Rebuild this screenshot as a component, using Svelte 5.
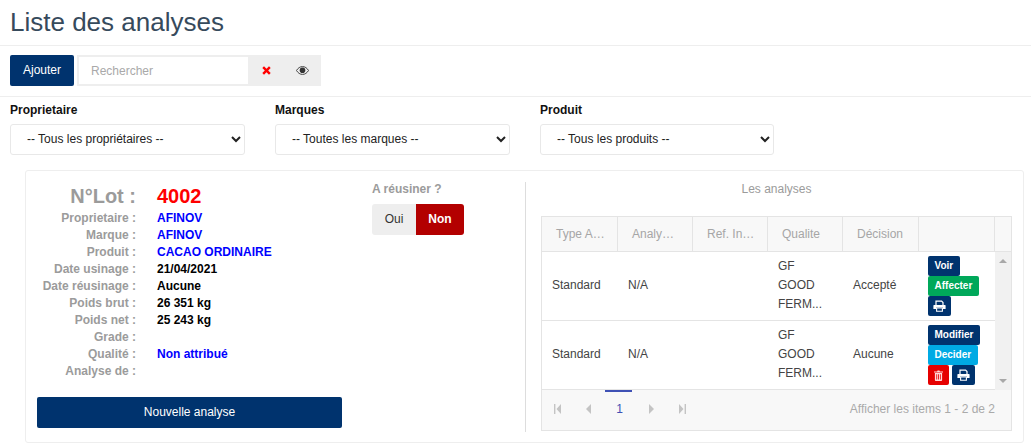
<script>
	const infos = [
		{ label: 'Proprietaire :', value: 'AFINOV', kind: 'blue' },
		{ label: 'Marque :', value: 'AFINOV', kind: 'blue' },
		{ label: 'Produit :', value: 'CACAO ORDINAIRE', kind: 'blue' },
		{ label: 'Date usinage :', value: '21/04/2021', kind: 'black' },
		{ label: 'Date réusinage :', value: 'Aucune', kind: 'black' },
		{ label: 'Poids brut :', value: '26 351 kg', kind: 'black' },
		{ label: 'Poids net :', value: '25 243 kg', kind: 'black' },
		{ label: 'Grade :', value: '', kind: 'black' },
		{ label: 'Qualité :', value: 'Non attribué', kind: 'blue' },
		{ label: 'Analyse de :', value: '', kind: 'black' }
	];

	const filters = [
		{ label: 'Proprietaire', option: '-- Tous les propriétaires --' },
		{ label: 'Marques', option: '-- Toutes les marques --' },
		{ label: 'Produit', option: '-- Tous les produits --' }
	];

	const columns = ['Type A…', 'Analy…', 'Ref. In…', 'Qualite', 'Décision', ''];
</script>

{#snippet printIcon()}
	<svg width="13" height="12" viewBox="0 0 13 12" fill="none">
		<path d="M3 5V1.2h5.6L10 2.6V5" stroke="#fff" stroke-width="1.2" />
		<path d="M1 5h11a.6.6 0 0 1 .6.6V9H10V7.5H3V9H.4V5.6A.6.6 0 0 1 1 5z" fill="#fff" />
		<path d="M3.6 8h5.8v3.2H3.6z" stroke="#fff" stroke-width="1.1" />
	</svg>
{/snippet}

<div class="page">
	<header class="title-bar">
		<h1>Liste des analyses</h1>
	</header>

	<div class="toolbar">
		<button class="btn-main">Ajouter</button>
		<div class="search">
			<input type="text" placeholder="Rechercher" />
			<span class="search-btn">
				<svg width="9" height="9" viewBox="0 0 9 9">
					<path d="M2 .3 4.5 2.8 7 .3 8.7 2 6.2 4.5 8.7 7 7 8.7 4.5 6.2 2 8.7.3 7 2.8 4.5.3 2z" fill="#f00" />
				</svg>
			</span>
			<span class="search-btn eye">
				<svg width="13" height="9" viewBox="0 0 13 9">
					<path d="M.5 4.5C2 2 4 .6 6.5.6S11 2 12.5 4.5C11 7 9 8.4 6.5 8.4S2 7 .5 4.5z" fill="none" stroke="#444" stroke-width="1" />
					<circle cx="6.5" cy="4.2" r="2.8" fill="#333" />
				</svg>
			</span>
		</div>
	</div>

	<div class="filters">
		{#each filters as filter}
			<div class="filter">
				<label for={filter.label}>{filter.label}</label>
				<select id={filter.label}>
					<option>{filter.option}</option>
				</select>
			</div>
		{/each}
	</div>

	<section class="card">
		<div class="lot">
			<dl class="lot-info">
				<dt class="big">N°Lot :</dt>
				<dd class="big">4002</dd>
				{#each infos as info}
					<dt>{info.label}</dt>
					<dd class={info.kind}>{info.value}</dd>
				{/each}
			</dl>
			<button class="btn-new">Nouvelle analyse</button>
		</div>

		<div class="rework">
			<div class="rework-title">A réusiner ?</div>
			<div class="switch">
				<span class="off">Oui</span>
				<span class="on">Non</span>
			</div>
		</div>

		<div class="analyses">
			<div class="analyses-title">Les analyses</div>
			<div class="grid">
				<div class="grid-head">
					{#each columns as col}
						<div class="th"><span>{col}</span></div>
					{/each}
					<div class="th-scroll"></div>
				</div>
				<div class="grid-body">
					<div class="rows">
						<div class="row">
							<div class="cell">Standard</div>
							<div class="cell">N/A</div>
							<div class="cell"></div>
							<div class="cell qual">GF<br />GOOD<br />FERM...</div>
							<div class="cell">Accepté</div>
							<div class="actions">
								<button class="act navy">Voir</button>
								<button class="act green">Affecter</button>
								<button class="act navy icon">{@render printIcon()}</button>
							</div>
						</div>
						<div class="row">
							<div class="cell">Standard</div>
							<div class="cell">N/A</div>
							<div class="cell"></div>
							<div class="cell qual">GF<br />GOOD<br />FERM...</div>
							<div class="cell">Aucune</div>
							<div class="actions">
								<button class="act navy">Modifier</button>
								<button class="act cyan">Decider</button>
								<button class="act red icon">
									<svg width="9" height="11" viewBox="0 0 10 12">
										<path d="M3.4 1.6 4 .5h2l.6 1.1H10v1H0v-1zM1 3.2h8V11a1 1 0 0 1-1 1H2a1 1 0 0 1-1-1zm1.6 1.3v6h.9v-6zm2 0v6h.9v-6zm2 0v6h.9v-6z" fill="#ffd9d9" fill-rule="evenodd" />
									</svg>
								</button>
								<button class="act navy icon">{@render printIcon()}</button>
							</div>
						</div>
					</div>
					<div class="scrollbar">
						<span class="arrow up"></span>
						<span class="arrow down"></span>
					</div>
				</div>
				<div class="pager">
					<svg class="pg" width="7" height="10" viewBox="0 0 7 10"><path d="M0 0h1.4v10H0zM7 0v10L2.5 5z" /></svg>
					<svg class="pg second" width="5" height="10" viewBox="0 0 5 10"><path d="M5 0v10L0 5z" /></svg>
					<span class="page-num">1</span>
					<svg class="pg" width="5" height="10" viewBox="0 0 5 10"><path d="M0 0v10l5-5z" /></svg>
					<svg class="pg last" width="7" height="10" viewBox="0 0 7 10"><path d="M0 0v10l4.5-5zM5.6 0H7v10H5.6z" /></svg>
					<span class="pager-info">Afficher les items 1 - 2 de 2</span>
				</div>
			</div>
		</div>
	</section>
</div>

<style>
	:global(body) {
		margin: 0;
		background: #fff;
		font-family: 'Liberation Sans', Arial, sans-serif;
	}

	.page {
		width: 1031px;
		height: 444px;
		overflow: hidden;
		font-size: 12px;
	}

	/* Header */
	.title-bar {
		height: 45px;
		padding-left: 10px;
		border-bottom: 1px solid #eee;
	}

	h1 {
		margin: 0;
		font-size: 26px;
		font-weight: 400;
		line-height: 45px;
		color: #364a5c;
	}

	/* Toolbar */
	.toolbar {
		display: flex;
		gap: 3px;
		height: 51px;
		padding: 9px 10px 0;
		box-sizing: border-box;
		border-bottom: 1px solid #eee;
	}

	.btn-main {
		width: 64px;
		height: 31px;
		padding: 0 0 2px;
		border: 0;
		border-radius: 2px;
		background: #00336e;
		color: #fff;
		font: 12px 'Liberation Sans', Arial, sans-serif;
	}

	.search {
		display: flex;
		height: 31px;
		background: #eee;
	}

	.search input {
		width: 171px;
		height: 31px;
		padding: 0 12px;
		box-sizing: border-box;
		border: 2px solid #eee;
		border-right: 0;
		border-radius: 2px 0 0 2px;
		background: #fff;
		font: 12px 'Liberation Sans', Arial, sans-serif;
		outline: none;
	}

	.search input::placeholder {
		color: #a9a9a9;
		opacity: 1;
	}

	.search-btn {
		display: flex;
		align-items: center;
		justify-content: center;
		width: 36px;
	}

	.search-btn.eye {
		width: 37px;
	}

	/* Filters */
	.filters {
		display: flex;
		gap: 30px;
		padding: 6px 10px 0;
	}

	.filter {
		display: flex;
		flex-direction: column;
		width: 235px;
	}

	.filter:last-child {
		width: 234px;
	}

	.filter label {
		height: 21px;
		line-height: 15px;
		font-weight: 700;
		color: #111;
	}

	.filter select {
		height: 31px;
		padding: 0 12px 2px;
		border: 1px solid #e8e8e8;
		border-radius: 3px;
		background: #fff;
		color: #222;
		font: 12px 'Liberation Sans', Arial, sans-serif;
		outline: none;
	}

	/* Card */
	.card {
		display: flex;
		width: 999px;
		height: 273px;
		margin: 15px 0 0 25px;
		box-sizing: border-box;
		border: 1px solid #eee;
		border-radius: 3px;
		padding: 11px 11px 10px;
	}

	.lot {
		width: 305px;
		padding-top: 2px;
		flex-shrink: 0;
		display: flex;
		flex-direction: column;
	}

	.lot-info {
		display: grid;
		grid-template-columns: 99px 1fr;
		grid-template-rows: 26px;
		grid-auto-rows: 17px;
		column-gap: 21px;
		margin: 0;
		font-weight: 700;
		line-height: 17px;
	}

	.lot-info dt {
		text-align: right;
		color: #9b9b9b;
	}

	.lot-info dd {
		margin: 0;
	}

	.lot-info .big {
		font-size: 20px;
		line-height: 24px;
	}

	.lot-info dd.big {
		color: #f00;
	}

	.blue {
		color: #00f;
	}

	.black {
		color: #000;
	}

	.btn-new {
		width: 305px;
		height: 31px;
		margin-top: 17px;
		border: 0;
		border-radius: 2px;
		background: #00336e;
		color: #fff;
		font: 12px 'Liberation Sans', Arial, sans-serif;
		padding: 0 0 2px;
	}

	/* Rework switch */
	.rework {
		width: 153px;
		margin-left: 30px;
		flex-shrink: 0;
	}

	.rework-title {
		height: 22px;
		font-weight: 700;
		line-height: 15px;
		color: #9b9b9b;
	}

	.switch {
		display: flex;
		width: 92px;
		height: 31px;
		border-radius: 3px;
		overflow: hidden;
		line-height: 30px;
		text-align: center;
	}

	.off {
		width: 44px;
		background: #eee;
		color: #333;
	}

	.on {
		width: 48px;
		background: #b30000;
		color: #fff;
		font-weight: 700;
	}

	/* Analyses */
	.analyses {
		width: 487px;
		padding-left: 15px;
		box-sizing: border-box;
		border-left: 1px solid #ddd;
	}

	.analyses-title {
		height: 34px;
		line-height: 15px;
		text-align: center;
		color: #9b9b9b;
	}

	.grid {
		width: 471px;
		height: 215px;
		box-sizing: border-box;
		border: 1px solid #e4e4e4;
		display: flex;
		flex-direction: column;
		color: #444;
	}

	.grid-head {
		display: grid;
		grid-template-columns: 76px 75px 75px 75px 76px 76px 16px;
		height: 34px;
		flex-shrink: 0;
		background: #f8f8f8;
		border-bottom: 1px solid #e4e4e4;
		color: #a6a6a6;
	}

	.th {
		display: flex;
		align-items: center;
		padding-left: 14px;
		border-right: 1px solid #e4e4e4;
		white-space: nowrap;
	}

	.grid-body {
		display: flex;
		flex: 1;
		min-height: 0;
	}

	.rows {
		width: 453px;
	}

	.row {
		display: grid;
		grid-template-columns: 76px 75px 75px 75px 76px 76px;
		align-items: center;
		height: 69px;
		box-sizing: border-box;
		border-bottom: 1px solid #e4e4e4;
	}

	.cell {
		padding: 0 0 2px 10px;
	}

	.qual {
		line-height: 19px;
	}

	.actions {
		display: flex;
		flex-wrap: wrap;
		align-content: center;
		gap: 0 3px;
		padding-left: 9px;
	}

	.act {
		display: flex;
		align-items: center;
		justify-content: center;
		height: 20px;
		padding: 0 6.5px 1px;
		border: 0;
		border-radius: 2px;
		color: #fff;
		font: 700 10px 'Liberation Sans', Arial, sans-serif;
		white-space: nowrap;
	}

	.act.icon {
		width: 23px;
		padding: 0;
	}

	.act.red {
		width: 21px;
	}

	.navy {
		background: #00336e;
	}

	.green {
		background: #00a85a;
	}

	.cyan {
		background: #00aae4;
	}

	.red {
		background: #e60000;
	}

	.scrollbar {
		display: flex;
		flex-direction: column;
		justify-content: space-between;
		align-items: center;
		width: 16px;
		padding: 7px 0;
		box-sizing: border-box;
		background: #f1f1f1;
	}

	.arrow {
		width: 0;
		height: 0;
		border-left: 4px solid transparent;
		border-right: 4px solid transparent;
	}

	.up {
		border-bottom: 4px solid #a8a8a8;
	}

	.down {
		border-top: 4px solid #a8a8a8;
	}

	/* Pager */
	.pager {
		display: flex;
		align-items: center;
		height: 40px;
		flex-shrink: 0;
		padding: 0 16px 2px 12px;
		background: #f8f8f8;
		box-sizing: border-box;
	}

	.pg {
		fill: #c4c4c4;
	}

	.second {
		margin-left: 25px;
	}

	.page-num {
		position: relative;
		width: 27px;
		margin: 0 17px 0 14px;
		padding-left: 2px;
		box-sizing: border-box;
		text-align: center;
		color: #3f51b5;
	}

	.page-num::before {
		content: '';
		position: absolute;
		left: 0;
		right: 0;
		top: -12px;
		height: 2px;
		background: #3f51b5;
	}

	.last {
		margin-left: 25px;
	}

	.pager-info {
		margin-left: auto;
		color: #aaa;
	}
</style>
